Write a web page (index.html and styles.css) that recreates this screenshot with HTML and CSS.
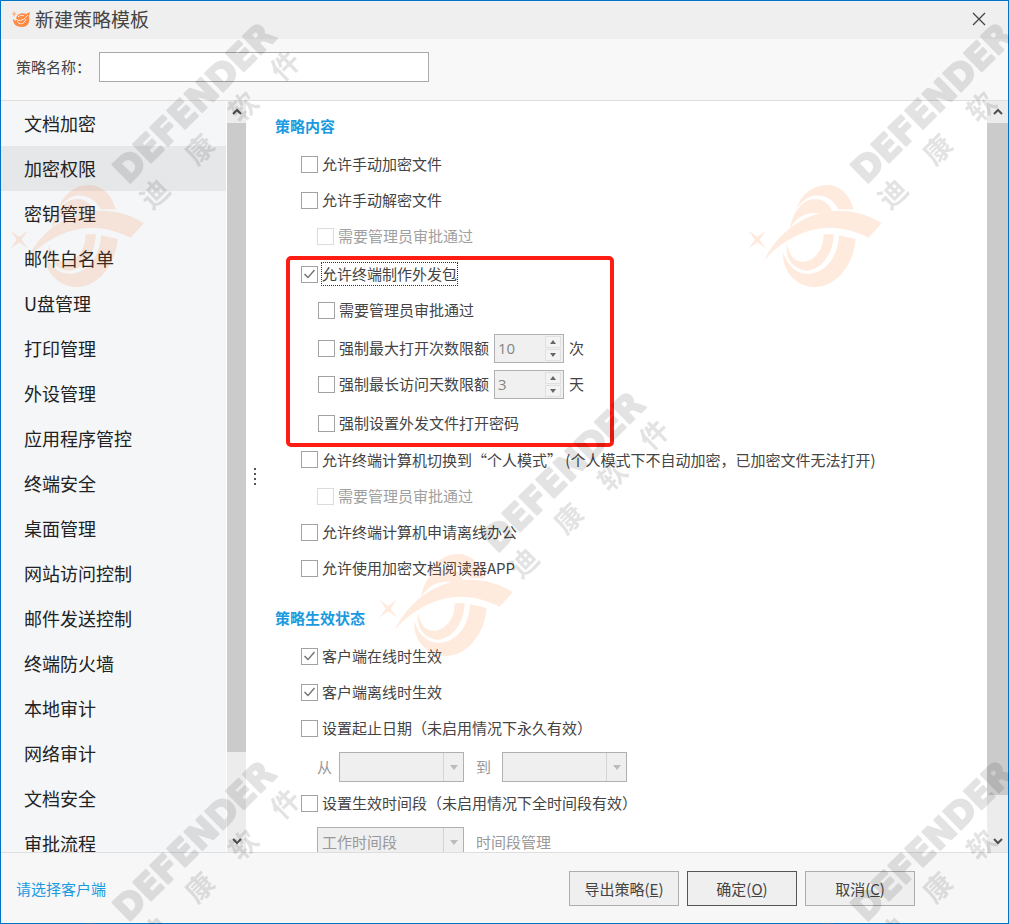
FILE: index.html
```html
<!DOCTYPE html>
<html lang="zh-CN">
<head>
    <meta charset="UTF-8">
    <meta name="viewport" content="width=device-width, initial-scale=1.0">
    <title>新建策略模板</title>
    <link rel="stylesheet" href="styles.css">
</head>
<body>
    <div class="window">
        <header class="title-bar">
            <svg class="app-icon" width="18" height="17" viewBox="0 0 18 17">
                <path fill="#f9b98c" d="M2 0l1 2 2 1-2 1-1 2-1-2-1-1 1-1z"/>
                <path fill="#ff8a42" d="M6 4c2-2 6-2 8-1l4-2-1 4c1 5 0 11-7 11-6 0-9-3-9-8l3 2c0-3 0-4 2-6z"/>
                <path fill="none" stroke="#f5ede8" stroke-width="1" d="M4 8c4 3 8 1 12-4M5 10c2 4 7 4 9-2M6 6c2-2 5-2 6-1"/>
            </svg>
            <h1>新建策略模板</h1>
            <button class="close-btn" aria-label="关闭">
                <svg width="14" height="14" viewBox="0 0 14 14"><path d="M1 1l12 12M13 1L1 13" stroke="#444" stroke-width="1.3" fill="none"/></svg>
            </button>
        </header>

        <div class="name-bar">
            <label for="policy-name">策略名称：</label>
            <input type="text" id="policy-name" class="name-input">
        </div>

        <div class="main">
            <nav class="sidebar">
                <a href="#">文档加密</a>
                <a href="#" class="active">加密权限</a>
                <a href="#">密钥管理</a>
                <a href="#">邮件白名单</a>
                <a href="#">U盘管理</a>
                <a href="#">打印管理</a>
                <a href="#">外设管理</a>
                <a href="#">应用程序管控</a>
                <a href="#">终端安全</a>
                <a href="#">桌面管理</a>
                <a href="#">网站访问控制</a>
                <a href="#">邮件发送控制</a>
                <a href="#">终端防火墙</a>
                <a href="#">本地审计</a>
                <a href="#">网络审计</a>
                <a href="#">文档安全</a>
                <a href="#">审批流程</a>
            </nav>
            <div class="scrollbar scrollbar-left" aria-hidden="true">
                <svg class="arrow" viewBox="0 0 10 8"><path d="M1 6l4-4 4 4"/></svg>
                <div class="track"><div class="thumb"></div></div>
                <svg class="arrow" viewBox="0 0 10 8"><path d="M1 2l4 4 4-4"/></svg>
            </div>
            <div class="splitter"><i></i><i></i><i></i><i></i></div>

            <div class="content">
                <h2>策略内容</h2>
                <label class="row"><input type="checkbox"><span>允许手动加密文件</span></label>
                <label class="row"><input type="checkbox"><span>允许手动解密文件</span></label>
                <label class="row sub"><input type="checkbox" disabled><span>需要管理员审批通过</span></label>

                <div class="highlight">
                    <label class="row"><input type="checkbox" checked><span class="focused">允许终端制作外发包</span></label>
                    <label class="row sub"><input type="checkbox"><span>需要管理员审批通过</span></label>
                    <div class="row sub spin-row">
                        <label class="check"><input type="checkbox"><span>强制最大打开次数限额</span></label>
                        <span class="spin">
                            <input type="text" value="10" aria-label="最大打开次数" disabled>
                            <span class="spin-btns">
                                <button class="up" aria-label="增加" disabled></button>
                                <button class="down" aria-label="减少" disabled></button>
                            </span>
                        </span>
                        <span>次</span>
                    </div>
                    <div class="row sub spin-row">
                        <label class="check"><input type="checkbox"><span>强制最长访问天数限额</span></label>
                        <span class="spin">
                            <input type="text" value="3" aria-label="最长访问天数" disabled>
                            <span class="spin-btns">
                                <button class="up" aria-label="增加" disabled></button>
                                <button class="down" aria-label="减少" disabled></button>
                            </span>
                        </span>
                        <span>天</span>
                    </div>
                    <label class="row sub"><input type="checkbox"><span>强制设置外发文件打开密码</span></label>
                </div>

                <label class="row after-highlight"><input type="checkbox"><span>允许终端计算机切换到“个人模式” (个人模式下不自动加密，已加密文件无法打开)</span></label>
                <label class="row sub"><input type="checkbox" disabled><span>需要管理员审批通过</span></label>
                <label class="row"><input type="checkbox"><span>允许终端计算机申请离线办公</span></label>
                <label class="row"><input type="checkbox"><span>允许使用加密文档阅读器APP</span></label>

                <h2 class="second">策略生效状态</h2>
                <label class="row"><input type="checkbox" checked><span>客户端在线时生效</span></label>
                <label class="row"><input type="checkbox" checked><span>客户端离线时生效</span></label>
                <label class="row"><input type="checkbox"><span>设置起止日期（未启用情况下永久有效）</span></label>
                <div class="row combo-row">
                    <label for="date-from">从</label>
                    <span class="combo">
                        <select id="date-from" disabled><option></option></select>
                        <span class="combo-arrow"></span>
                    </span>
                    <label for="date-to">到</label>
                    <span class="combo">
                        <select id="date-to" disabled><option></option></select>
                        <span class="combo-arrow"></span>
                    </span>
                </div>
                <label class="row"><input type="checkbox"><span>设置生效时间段（未启用情况下全时间段有效）</span></label>
                <div class="row combo-row">
                    <span class="combo wide">
                        <select aria-label="时间段" disabled><option>工作时间段</option></select>
                        <span class="combo-arrow"></span>
                    </span>
                    <span>时间段管理</span>
                </div>
            </div>

            <div class="scrollbar scrollbar-right" aria-hidden="true">
                <svg class="arrow" viewBox="0 0 10 8"><path d="M1 6l4-4 4 4"/></svg>
                <div class="track"><div class="thumb"></div></div>
                <svg class="arrow" viewBox="0 0 10 8"><path d="M1 2l4 4 4-4"/></svg>
            </div>
        </div>

        <footer class="footer">
            <a href="#">请选择客户端</a>
            <div class="buttons">
                <button>导出策略(<u>E</u>)</button>
                <button class="default">确定(<u>O</u>)</button>
                <button>取消(<u>C</u>)</button>
            </div>
        </footer>
    </div>

    <!-- 水印 -->
    <svg class="watermark" aria-hidden="true">
        <defs>
            <g id="mark">
                <g class="mark-logo" transform="translate(-8 0) scale(.3333)">
                    <path d="M55 692L82 711L108 691L89 719L108 746L82 727L55 747L74 719Z"/>
                    <path d="M198 628C215 580 250 555 292 555C330 555 360 585 371 628L325 628C310 590 265 580 240 590C220 600 205 618 198 628Z"/>
                    <path d="M180 685C187 640 215 598 255 597C282 597 300 615 306 632Q284 635 270 640C235 635 203 645 180 685Z"/>
                    <path d="M102 782C140 705 205 650 290 635C350 627 410 640 455 670L416 713C380 695 340 683 300 683C220 685 150 725 102 782Z"/>
                    <path d="M172 733C178 770 195 788 225 785C260 778 282 745 281 703L311 703C310 760 275 812 228 812C190 808 163 775 172 733Z"/>
                    <path d="M160 757C172 798 200 822 235 822C290 820 325 765 327 706L377 717C370 800 315 861 255 861C195 861 155 810 160 757Z"/>
                </g>
                <g class="mark-text">
                    <text class="mark-en" transform="translate(128 185) rotate(-44.5)">DEFENDER</text>
                    <text class="mark-cn" transform="translate(152 211) rotate(-44.5)" x="0 63 124 183">迪康软件</text>
                </g>
            </g>
            <pattern id="marks" width="738" height="738" patternUnits="userSpaceOnUse">
                <use href="#mark"/>
                <use href="#mark" x="369" y="369"/>
            </pattern>
        </defs>
        <rect width="100%" height="100%" fill="url(#marks)"/>
    </svg>
</body>
</html>
```
FILE: styles.css
```css
* {
    box-sizing: border-box;
}
body {
    margin: 0;
    font-family: "Noto Sans CJK SC", "Microsoft YaHei", sans-serif;
    font-size: 15px;
    line-height: 20px;
    color: #444;
}
button, input, select {
    font: inherit;
    color: inherit;
}
.window {
    display: flex;
    flex-direction: column;
    height: 100vh;
    border: 1px solid #0073c6;
    background-color: #f8f8f8;
}

/* 标题栏 */
.title-bar {
    display: flex;
    align-items: center;
    flex: none;
    height: 38px;
    padding: 0 16px 2px 11px;
    background-color: #efefef;
}
.title-bar h1 {
    flex: 1;
    margin: 0 0 0 5px;
    font-size: 19px;
    font-weight: normal;
}
.close-btn {
    display: flex;
    padding: 6px;
    border: none;
    background: none;
}

.name-bar {
    display: flex;
    align-items: center;
    flex: none;
    height: 62px;
    padding: 0 15px 6px;
    border-bottom: 1px solid #dedede;
}
.name-bar label {
    width: 83px;
}
.name-input {
    width: 330px;
    height: 30px;
    padding: 0 6px;
    border: 1px solid #aaa;
    background-color: #fff;
}

.main {
    display: flex;
    flex: 1;
    min-height: 0;
    background-color: #fff;
}

/* 左侧菜单 */
.sidebar {
    flex: none;
    width: 225px;
    overflow: hidden;
    background-color: #f4f6f8;
}
.sidebar a {
    display: block;
    height: 45px;
    padding-left: 23px;
    font-size: 18px;
    line-height: 45px;
    color: #222;
    text-decoration: none;
}
.sidebar .active {
    background-color: #e5e7e9;
}

.scrollbar {
    display: flex;
    flex-direction: column;
    align-items: center;
    flex: none;
    background-color: #ececec;
}
.scrollbar-left {
    width: 19px;
    margin-left: 1px;
}
.scrollbar-right {
    width: 21px;
}
.arrow {
    width: 10px;
    height: 22px;
    fill: none;
    stroke: #505050;
    stroke-width: 2;
}
.track {
    flex: 1;
    width: 100%;
}
.thumb {
    height: 89%;
    background-color: #cbcbcb;
}
.scrollbar-right .thumb {
    height: 95%;
}
.splitter {
    display: flex;
    flex-direction: column;
    align-items: center;
    justify-content: center;
    gap: 3px;
    flex: none;
    width: 17px;
}
.splitter i {
    width: 2px;
    height: 2px;
    background-color: #555;
}

/* 右侧内容 */
.content {
    flex: 1;
    min-width: 0;
    padding: 7px 0 0 12px;
    overflow: hidden;
    white-space: nowrap;
}
.content h2 {
    margin: 0 0 2px;
    font-size: 15px;
    line-height: 36px;
    color: #1b9adf;
}
.content .second {
    margin-top: 14px;
}
.row {
    display: flex;
    align-items: center;
    height: 36px;
    padding-left: 26px;
}
.sub {
    padding-left: 42px;
}
.row input[type="checkbox"] {
    appearance: none;
    flex: none;
    width: 17px;
    height: 17px;
    margin: 0 4px 0 0;
    border: 1px solid #a2a2a2;
    background-color: #fff;
}
.row input[type="checkbox"]:checked::before {
    content: "";
    display: block;
    width: 15px;
    height: 15px;
    background-color: #707070;
    clip-path: polygon(2px 8px, 3px 7px, 6px 10px, 12px 3px, 13px 4px, 6px 12px);
}
.row input[type="checkbox"]:disabled {
    border-color: #dcdcdc;
}
.row input[type="checkbox"]:disabled + span {
    color: #a0a0a0;
}
.focused {
    outline: 1px dotted #333;
    line-height: 22px;
}

.highlight {
    width: 328px;
    margin: 2px 0 0 11px;
    padding-bottom: 2px;
    border: 4px solid #fd1d12;
    border-radius: 5px;
}
.highlight .row {
    padding-left: 11px;
}
.highlight .sub {
    padding-left: 28px;
}
.highlight .row:first-child {
    height: 28px;
    margin-bottom: 4px;
}
.highlight .row:nth-child(3) {
    margin-top: 2px;
}
.highlight .row:last-child {
    margin-top: 3px;
}
.after-highlight {
    height: 25px;
    margin-bottom: 6px;
}
.check {
    display: flex;
    align-items: center;
}
.spin-row {
    gap: 5px;
}
.spin {
    display: flex;
    width: 70px;
    height: 29px;
    border: 1px solid #b0b0b6;
    background-color: #f0f0f0;
}
.spin input {
    flex: 1;
    width: 0;
    padding: 0 3px;
    border: none;
    background: none;
    font-family: "Open Sans", sans-serif;
    color: #858585;
}
.spin-btns {
    display: flex;
    flex-direction: column;
    width: 20px;
    padding: 1px 2px;
    gap: 1px;
}
.spin-btns button {
    display: flex;
    align-items: center;
    justify-content: center;
    flex: 1;
    padding: 0;
    border: 1px solid #e0e0e0;
    background-color: #f3f3f3;
}
.spin-btns button::before {
    content: "";
    border: 3px solid transparent;
}
.spin-btns .up::before {
    border-top: none;
    border-bottom: 4px solid #666;
}
.spin-btns .down::before {
    border-bottom: none;
    border-top: 4px solid #666;
}

.combo-row {
    height: 39px;
    padding: 3px 0 0 42px;
    color: #999;
}
.combo-row label {
    width: 22px;
}
.combo {
    display: flex;
    width: 125px;
    height: 30px;
    margin-right: 12px;
    border: 1px solid #b0b0b0;
    background-color: #efefef;
}
.combo.wide {
    width: 147px;
}
.combo + label {
    width: 26px;
}
.combo select {
    appearance: none;
    flex: 1;
    min-width: 0;
    padding: 0 4px;
    border: none;
    background: none;
    color: #999;
    opacity: 1;
}
.combo-arrow {
    display: flex;
    align-items: center;
    justify-content: center;
    width: 20px;
    border-left: 1px solid #d4d4d4;
}
.combo-arrow::before {
    content: "";
    border: 4px solid transparent;
    border-top: 5px solid #bbb;
    border-bottom: none;
}

/* 底部 */
.footer {
    display: flex;
    align-items: center;
    justify-content: space-between;
    flex: none;
    height: 71px;
    padding: 1px 93px 0 15px;
    border-top: 1px solid #dedede;
    background-color: #f7f7f7;
}
.footer a {
    color: #1b9adf;
    text-decoration: none;
}
.buttons {
    display: flex;
    gap: 8px;
}
.buttons button {
    width: 110px;
    height: 35px;
    padding: 0;
    border: 1px solid #adadad;
    background-color: #efefef;
}
.buttons .default {
    border-color: #555;
}

.watermark {
    position: fixed;
    top: 0;
    left: 0;
    width: 100%;
    height: 100%;
    pointer-events: none;
}
.mark-logo {
    fill: #ff6a10;
    opacity: 0.14;
}
.mark-text {
    fill: #000;
    stroke: #000;
    stroke-linejoin: round;
    opacity: 0.11;
}
.mark-en {
    font-family: "DejaVu Sans", sans-serif;
    font-size: 35px;
    font-weight: bold;
    stroke-width: 2px;
}
.mark-cn {
    font-size: 28px;
    font-weight: bold;
    stroke-width: 0;
}
```
